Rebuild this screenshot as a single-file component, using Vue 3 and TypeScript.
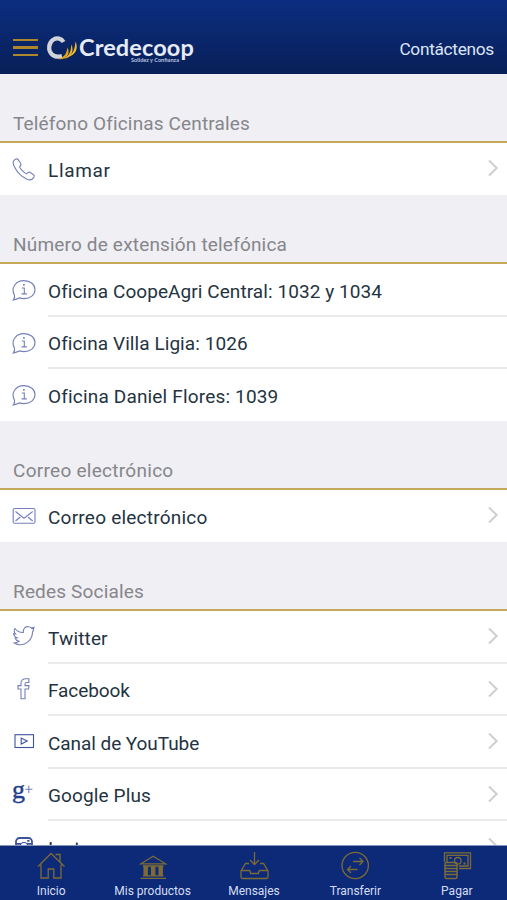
<script setup lang="ts">
interface Row { icon: string; label: string; link: boolean; track: number }
interface Section { title: string; rows: Row[]; track: number }

const sections: Section[] = [
  { title: 'Teléfono Oficinas Centrales', track: 0.15, rows: [{ icon: 'phone', label: 'Llamar', link: true, track: 0.65 }] },
  {
    title: 'Número de extensión telefónica',
    track: 0.18,
    rows: [
      { icon: 'info', label: 'Oficina CoopeAgri Central: 1032 y 1034', link: false, track: 0.07 },
      { icon: 'info', label: 'Oficina Villa Ligia: 1026', link: false, track: 0.07 },
      { icon: 'info', label: 'Oficina Daniel Flores: 1039', link: false, track: 0.17 },
    ],
  },
  { title: 'Correo electrónico', track: 0.28, rows: [{ icon: 'mail', label: 'Correo electrónico', link: true, track: 0.23 }] },
  {
    title: 'Redes Sociales',
    track: 0.17,
    rows: [
      { icon: 'twitter', label: 'Twitter', link: true, track: 0.15 },
      { icon: 'facebook', label: 'Facebook', link: true, track: -0.1 },
      { icon: 'youtube', label: 'Canal de YouTube', link: true, track: -0.06 },
      { icon: 'google', label: 'Google Plus', link: true, track: 0.12 },
      { icon: 'instagram', label: 'Instagram', link: true, track: 0.15 },
    ],
  },
]

const tabs = [
  { icon: 'home', label: 'Inicio' },
  { icon: 'bank', label: 'Mis productos' },
  { icon: 'inbox', label: 'Mensajes' },
  { icon: 'transfer', label: 'Transferir' },
  { icon: 'pay', label: 'Pagar' },
]
</script>

<template>
  <div class="screen">
    <header class="topbar">
      <div class="menu"><i></i><i></i><i></i></div>
      <svg class="mark" viewBox="0 0 32 26" width="32" height="26">
        <path d="M17.500 7 C15.500 3.300 11 2.500 7.500 4.500 C2.500 7.500 1.800 15 5.500 19 C8.500 22 12.500 22.200 16 21" fill="none" stroke="#d0d3d8" stroke-width="4.200" />
        <path d="M12 24 C18.500 22.500 20.500 18.500 21.500 12.500 C24.500 18 21 25.500 12 24Z" fill="#e3a51c" />
        <path d="M17.500 23.500 C23.500 21 25 16 25.300 9.500 C28.500 15.500 25.500 23.500 17.500 23.500Z" fill="#efb21e" />
        <path d="M23 21.500 C27.500 18 29 13 29.500 6.500 C32.500 12.500 30 19.500 23 21.500Z" fill="#f4bc2a" />
      </svg>
      <div class="brand">
        <span class="name">Credecoop</span>
        <span class="motto">Solidez y Confianza</span>
      </div>
      <span class="contact">Contáctenos</span>
    </header>

    <main class="list">
      <section v-for="s in sections" :key="s.title">
        <h2 :style="{ letterSpacing: s.track + 'px' }">{{ s.title }}</h2>
        <div v-for="r in s.rows" :key="r.label" class="row">
          <svg class="icon" viewBox="0 0 24 24" width="24" height="24">
            <path v-if="r.icon === 'phone'" d="M3.500 2.200 C.8 3.500 .8 6.300 2 9 C4.800 15 9.500 19.700 15 22.300 C18 23.600 20.500 22.700 22 20 C22.500 19 22.300 18.300 21.500 17.700 L18 15.300 C16.800 14.700 15.800 15.300 14.800 16.700 C13.500 17.200 7.300 11 7.600 9.600 C9 8.500 9.300 7.300 8.500 6.200 L6.200 2.600 C5.500 1.600 4.500 1.700 3.500 2.200Z" />
            <g v-else-if="r.icon === 'info'">
              <path d="M2.500 17.200 C-1.500 10.200 3.500 2.600 12 2.600 C18.500 2.600 23 6.700 23 11.600 C23 17 18.300 20.600 12 20.600 C10.300 20.600 8.700 20.300 7.300 19.900 C5.500 20.700 3.500 21.400 1.300 22 C2.300 20.700 3 19 2.500 17.200Z" />
              <path d="M9.800 10h2.500v5.700M9.500 15.900h5.400" /><path d="M11.900 6v1.800" stroke-width="1.600" />
            </g>
            <g v-else-if="r.icon === 'mail'"><rect x="1.200" y="4.500" width="21.800" height="14.800" rx="1.500" /><path d="M3.500 7.500 12 14.200 20.700 7.500M3.500 17 8.200 13M20.700 17 16 13" /></g>
            <g v-else-if="r.icon === 'twitter'"><path d="M3 3.500 C4.800 6 7.500 7.600 11.300 7.500 C11 3.500 13.500 1.400 16.500 1.700 C17.800 1.800 18.800 2.300 19.500 3 L22 2.200 21.500 4.200 21.300 6 20.500 6.700 C20.600 14 14.500 20.500 7.300 19.700 C5.500 19.500 3.800 18.900 2.200 18 C4 17.900 5.600 17.300 7 16.300 C4.700 15.700 3.800 14.800 3.100 13.200 L5 12.800 C2.800 12 1.700 10.600 1.700 8.600 L3.500 8.800 C2 7.400 1.900 5.500 3 3.500Z" /><path d="M19.500 3.500h1.500" stroke-width="1.700" /></g>
            <path v-else-if="r.icon === 'facebook'" d="M9 20.800V11H6V7.600h3V5.400C9 2.200 11 .8 13.700 .8h3.200v3.700h-2.200C13.400 4.500 13 5.200 13 6.300v1.300h4l-.5 3.400H13v9.800Z" />
            <g v-else-if="r.icon === 'youtube'" class="dark"><rect x="3" y="4.700" width="18.500" height="12.800" /><path d="M9.200 8.100v6l6-3Z" /></g>
            <g v-else-if="r.icon === 'google'"><text x="0" y="14.700" class="g">g</text><path d="M13.200 6.300h7.200M16.800 2.700v7.200" /></g>
            <g v-else class="dark"><rect x="4" y="3" width="16" height="17" rx="3.500" stroke-width="1.800" /><path d="M4 8.800h5M15 8.800h5M15.200 5.800h2.300" stroke-width="1.800" /><circle cx="12" cy="11.500" r="4" /></g>
          </svg>
          <div class="cell">
            <span :style="{ letterSpacing: r.track + 'px' }">{{ r.label }}</span>
            <svg v-if="r.link" class="chevron" viewBox="0 0 12 18" width="12" height="18"><path d="M2 1.500 9.700 9 2 16.500" /></svg>
          </div>
        </div>
      </section>
    </main>

    <nav class="tabs">
      <div v-for="t in tabs" :key="t.label" class="tab">
        <svg viewBox="0 0 30 30" width="30" height="30">
          <path v-if="t.icon === 'home'" d="M2 15.500 15 2.500 28.500 15.500M5 13.500V27h7.200v-9h5.600v9H25V13.500M19.500 3.500H24v7" />
          <g v-else-if="t.icon === 'bank'"><path d="M3 12.800 15.200 5.300 27.500 12.800ZM5 15h20.500M5 24.800h20.500M2.500 27.300h25.500" /><g class="columns"><path d="M7.700 15v10M15.200 15v10M22.700 15v10" /></g></g>
          <path v-else-if="t.icon === 'inbox'" d="M15.500 1v12M11 9 15.500 13.500 20 9M10 12.500H6.500L2 20v6q0 1.500 1.500 1.500h24q1.500 0 1.500-1.500v-6L24.500 12.500H21M2.500 19.500H10q1.500 0 1.500 3h8q0-3 1.500-3h7.500" />
          <g v-else-if="t.icon === 'transfer'"><circle cx="15.200" cy="14.500" r="13.200" /><path d="M13 10.500h10M19.500 7 23 10.500 19.500 14M17.500 18.500h-10M11 15 7.500 18.500 11 22" /></g>
          <g v-else><path d="M2.500 11V1.800h26v15.700H17M5 11V4.300h21V15h-9" /><circle cx="15.800" cy="9.800" r="3.300" /><path d="M7.500 7h2M21.500 12.500h2" stroke-width="1.800" /><path d="M3 13q0-1.500 1.500-1.500h9q1.500 0 1.500 1.500v13q0 1.500-1.500 1.500h-9Q3 27.500 3 26ZM3 14.500h12M3 17.500h12M3 20.500h12M3 23.500h12" stroke-width="1.500" /></g>
        </svg>
        <span>{{ t.label }}</span>
      </div>
    </nav>
  </div>
</template>

<style>
body { margin: 0; }
</style>

<style scoped>
.screen { display: flex; flex-direction: column; width: 507px; height: 900px; overflow: hidden; background: #efeff4; font-family: Roboto, "Liberation Sans", sans-serif; }
.topbar { flex: none; height: 74px; box-sizing: border-box; display: flex; align-items: flex-start; padding: 34px 13px 0 13px; background: linear-gradient(#0c2d80, #082058); color: #dce4f4; }
.menu { display: flex; flex-direction: column; gap: 5.200px; width: 25px; margin: 5px 8px 0 0; }
.menu i { height: 2.300px; background: #ae872c; }
.mark { margin-top: 1px; flex: none; }
.brand { display: flex; flex-direction: column; margin-left: 1px; width: 116px; }
.name { font: 700 23.500px/27px Lato, sans-serif; letter-spacing: .12px; color: #e6ebf5; }
.motto { align-self: flex-end; margin: -5px 16px 0 0; font: 700 5.600px/7px Lato, sans-serif; white-space: nowrap; color: #b9c4df; }
.contact { margin: 5px 0 0 auto; font-size: 17.300px; line-height: 20px; letter-spacing: -.3px; }
.list { flex: 1; min-height: 0; overflow: hidden; }
h2 { box-sizing: border-box; height: 69.100px; margin: 0; padding: 38px 0 0 13px; border-bottom: 2px solid #c5a95b; font-size: 19px; line-height: 24px; font-weight: 400; color: #86868b; }
.row { height: 52.600px; display: flex; padding-left: 12px; background: #fff; color: #243341; }
.row:last-child { height: 51.850px; }
.icon { flex: none; margin: 14px 12px 0 0; overflow: visible; fill: none; stroke: #7580b9; stroke-width: 1.100; }
.dark { stroke: #3c539b; }
.g { fill: #263f8b; stroke: #263f8b; stroke-width: .4; font: 400 26px "Liberation Serif", serif; }
.cell { flex: 1; box-sizing: border-box; display: flex; justify-content: space-between; align-items: flex-start; padding: 15.600px 8px 0 0; border-bottom: 2px solid #ebebed; font-size: 19px; line-height: 24px; }
.row:last-child .cell { border-bottom: 0; }
.chevron { margin-top: .4px; fill: none; stroke: #cfcfd3; stroke-width: 2; }
.tabs { flex: none; height: 55px; box-sizing: border-box; display: grid; grid-template-columns: repeat(5, 1fr); border-top: 1px solid #8794bb; background: #0c2a78; color: #d5def2; }
.tab { display: flex; flex-direction: column; align-items: center; padding: 5px 0 0 1px; font-size: 12px; line-height: 16px; }
.tab svg { fill: none; stroke: #7d6b35; stroke-width: 1.300; }
.tab span { margin-top: 2px; white-space: nowrap; }
.columns { stroke-width: 4.500; }
</style>
